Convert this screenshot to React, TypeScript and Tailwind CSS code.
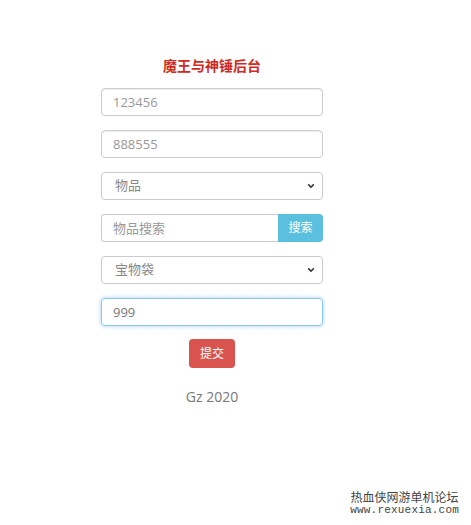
import React from 'react';

const font = { fontFamily: '"Open Sans", "Noto Sans CJK SC", sans-serif' };

const Chevron = () => (
  <svg className="pointer-events-none absolute right-[8px] top-1/2 h-[8px] w-[8px] -translate-y-1/2" viewBox="0 0 10 10">
    <path d="M1.5 3 L5 6.5 L8.5 3" fill="none" stroke="#333" strokeWidth="2" />
  </svg>
);

const Field = ({ placeholder, value, focused }: { placeholder?: string; value?: string; focused?: boolean }) => (
  <input
    readOnly
    placeholder={placeholder}
    defaultValue={value}
    className={`h-[28px] w-[222px] rounded-[4px] border bg-white px-[11px] text-[13px] text-[#777] placeholder:text-[#999] outline-none ${
      focused ? 'border-[#8cc7ea] shadow-[0_0_4px_rgba(102,175,233,0.6)]' : 'border-[#ccc] shadow-[inset_0_1px_1px_rgba(0,0,0,0.075)]'
    }`}
  />
);

const Select = ({ label }: { label: string }) => (
  <div className="relative w-[222px]">
    <select className="h-[28px] w-full appearance-none rounded-[4px] border border-[#ccc] bg-white pl-[13px] text-[13px] text-[#888] outline-none">
      <option>{label}</option>
    </select>
    <Chevron />
  </div>
);

export default function App() {
  return (
    <div className="relative h-[525px] w-[471px] bg-white" style={font}>
      <div className="ml-[101px] flex w-[222px] flex-col items-center pt-[56px]">
        <h1 className="text-[14px] font-bold leading-[20px] text-[#d12a22]">魔王与神锤后台</h1>
        <div className="mt-[12px] flex flex-col gap-[14px]">
          <Field placeholder="123456" />
          <Field placeholder="888555" />
          <Select label="物品" />
          <div className="flex h-[28px] w-[222px]">
            <input
              readOnly
              placeholder="物品搜索"
              className="h-full min-w-0 flex-1 rounded-l-[4px] border border-r-0 border-[#ccc] px-[11px] text-[13px] outline-none placeholder:text-[#999]"
            />
            <button className="h-full w-[45px] rounded-r-[4px] bg-[#5bc0de] text-[12px] text-white">搜索</button>
          </div>
          <Select label="宝物袋" />
          <Field value="999" focused />
        </div>
        <button className="mt-[13px] h-[29px] w-[46px] rounded-[4px] bg-[#d9534f] text-[12px] text-white">提交</button>
        <p className="mt-[19px] text-[14px] leading-[20px] text-[#777]">Gz 2020</p>
      </div>
      <div className="absolute right-[12px] top-[491px] flex flex-col items-center leading-none text-[#444]">
        <span className="text-[12px]" style={{ fontFamily: '"Noto Sans CJK SC", sans-serif' }}>热血侠网游单机论坛</span>
        <span className="mt-[2px] text-[11px] tracking-[0.2px]" style={{ fontFamily: '"Liberation Mono", monospace' }}>www.rexuexia.com</span>
      </div>
    </div>
  );
}
